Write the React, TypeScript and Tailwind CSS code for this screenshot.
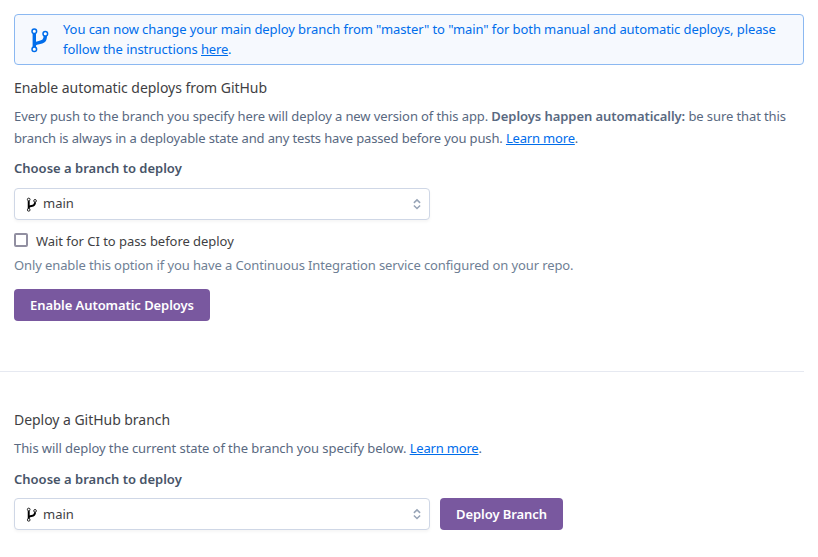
import React from "react";

function Branch({ className }: { className: string }) {
  return (
    <svg viewBox="0 0 20 26" className={className} fill="none" stroke="currentColor">
      <path d="M4.300 7v14" strokeWidth="3.400" />
      <path d="M4.500 17.500C7 14 15.300 17.800 15.300 9" strokeWidth="3.400" />
      <circle cx="4.300" cy="4.300" r="2.300" strokeWidth="1.500" className="fill-white" />
      <circle cx="15.300" cy="6.700" r="2.300" strokeWidth="1.500" className="fill-white" />
      <circle cx="4.300" cy="22.300" r="2.300" strokeWidth="1.500" className="fill-white" />
    </svg>
  );
}

function BranchSelect({ labelClass = "" }: { labelClass?: string }) {
  return (
    <button className="flex h-8 w-[416px] items-center rounded-[4px] border border-[#cfd7e6] bg-white pr-2 pl-[11px] text-left shadow-[0_2px_3px_rgba(0,0,0,0.04)]">
      <Branch className="h-[15px] w-[12px] text-black" />
      <span className={`ml-[5px] flex-1 text-[#3f3f44] ${labelClass}`}>main</span>
      <svg viewBox="0 0 8 12" className="h-3 w-2 text-[#96a3b6]" fill="none" stroke="currentColor" strokeWidth="1.500">
        <path d="M.9 4.900 4 1.900l3.100 3M.9 7.500 4 10.500l3.100-3" />
      </svg>
    </button>
  );
}

function Link({ children }: { children: React.ReactNode }) {
  return <a href="#" className="tracking-[-0.18px] text-[#006deb] underline underline-offset-1">{children}</a>;
}

export default function App() {
  return (
    <main className="h-[557px] w-[818px] overflow-hidden bg-white pt-[14px] font-['Noto_Sans','Open_Sans',sans-serif] text-[13px] leading-5 whitespace-nowrap text-[#596981]">
      <div className="ml-[14px] flex h-[51px] w-[790px] items-center rounded-[4px] border border-[#8bb8f1] bg-[#f6f9fe] pl-[15px] text-[#006deb]">
        <Branch className="h-[26px] w-5" />
        <p className="mb-[2px] ml-[13px] tracking-[-0.088px]">
          <span className="block">You can now change your main deploy branch from "master" to "main" for both manual and automatic deploys, please</span>
          <span className="block tracking-[-0.05px]">follow the instructions <Link>here</Link>.</span>
        </p>
      </div>

      <section className="h-[306px] pt-[13px] pl-[14px]">
        <h2 className="text-[14px] tracking-[-0.04px] text-[#3f3f44]">Enable automatic deploys from GitHub</h2>
        <p className="mt-[7px] leading-[22px] tracking-[-0.1px]">
          <span className="block">Every push to the branch you specify here will deploy a new version of this app. <b className="font-semibold tracking-[-0.06px]">Deploys happen automatically:</b> be sure that this</span>
          <span className="block tracking-[-0.135px]">branch is always in a deployable state and any tests have passed before you push. <Link>Learn more</Link>.</span>
        </p>
        <h3 className="mt-[9px] mb-[10px] font-semibold text-[#475468]">Choose a branch to deploy</h3>
        <BranchSelect labelClass="mb-[2px]" />
        <label className="mt-[11px] flex items-center text-[#3f3f44]">
          <span className="mb-[2px] size-[14px] rounded-[2px] border-2 border-[#918fa1] bg-white" />
          <span className="ml-2 tracking-[-0.04px]">Wait for CI to pass before deploy</span>
        </label>
        <p className="mt-[4px] tracking-[-0.108px] text-[#6f7f95]">Only enable this option if you have a Continuous Integration service configured on your repo.</p>
        <button className="mt-[14px] h-8 w-[196px] rounded-[4px] bg-[#79589f] font-semibold tracking-[-0.07px] text-white">Enable Automatic Deploys</button>
      </section>

      <hr className="w-[804px] border-[#e6e9f1]" />

      <section className="pt-[38px] pl-[14px]">
        <h2 className="text-[14px] tracking-[-0.04px] text-[#3f3f44]">Deploy a GitHub branch</h2>
        <p className="mt-2 tracking-[-0.08px]">This will deploy the current state of the branch you specify below. <Link>Learn more</Link>.</p>
        <h3 className="mt-[11px] mb-[9px] font-semibold text-[#475468]">Choose a branch to deploy</h3>
        <div className="flex gap-[10px]">
          <BranchSelect />
          <button className="h-8 w-[123px] rounded-[4px] bg-[#79589f] font-semibold tracking-[-0.08px] text-white">Deploy Branch</button>
        </div>
      </section>
    </main>
  );
}
